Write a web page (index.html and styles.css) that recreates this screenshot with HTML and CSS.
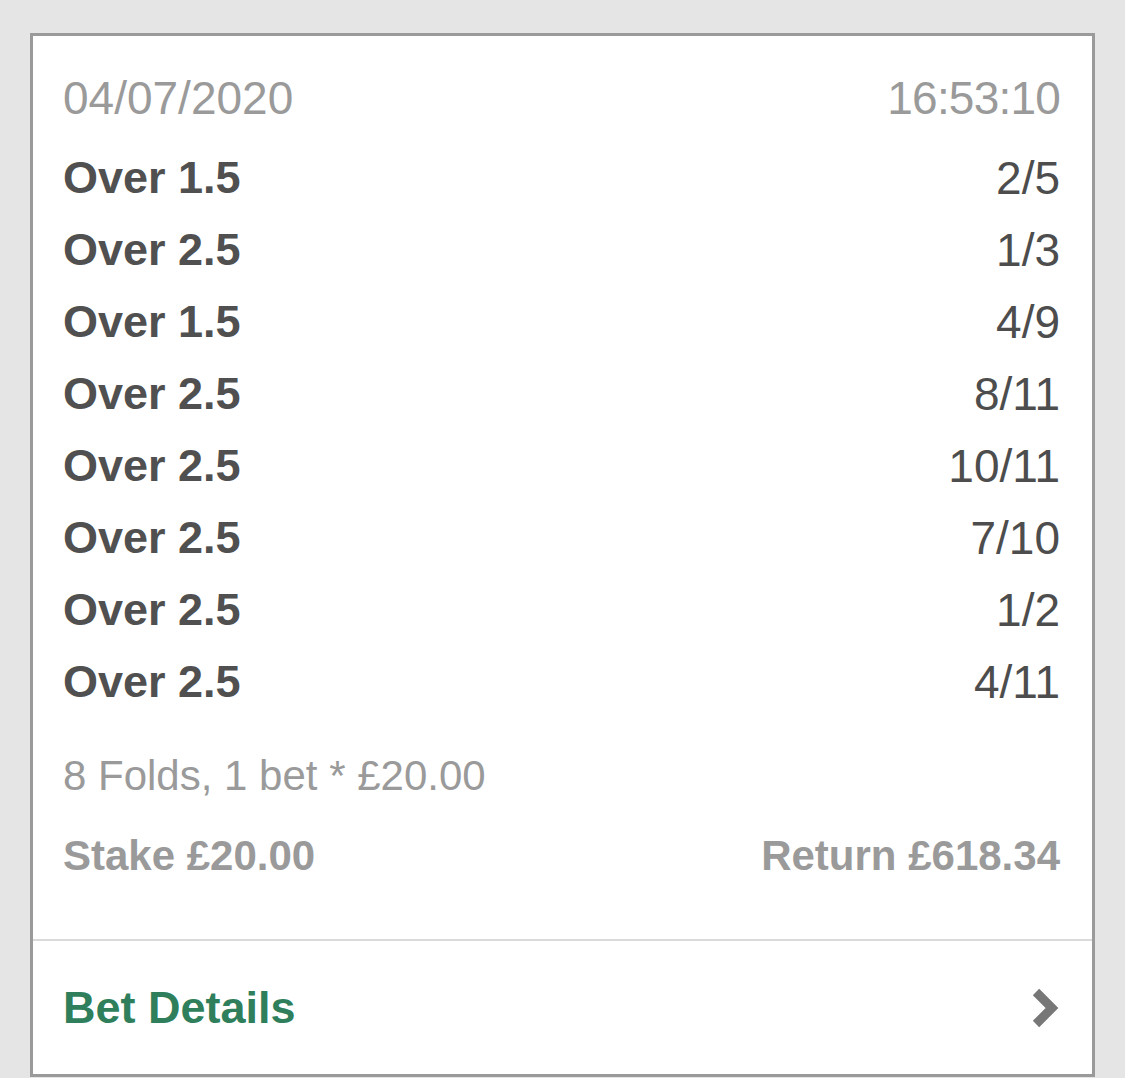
FILE: index.html
```html
<!DOCTYPE html>
<html lang="en">
<head>
    <meta charset="UTF-8">
    <meta name="viewport" content="width=device-width, initial-scale=1.0">
    <title>Bet History</title>
    <link rel="stylesheet" href="styles.css">
</head>
<body>
    <div class="bet-card">
        <div class="bet-body">
            <div class="row meta">
                <span>04/07/2020</span>
                <span class="time">16:53:10</span>
            </div>

            <!-- selecoes -->
            <div class="legs">
                <div class="row leg"><span class="market">Over 1.5</span><span class="odds">2/5</span></div>
                <div class="row leg"><span class="market">Over 2.5</span><span class="odds">1/3</span></div>
                <div class="row leg"><span class="market">Over 1.5</span><span class="odds">4/9</span></div>
                <div class="row leg"><span class="market">Over 2.5</span><span class="odds">8/11</span></div>
                <div class="row leg"><span class="market">Over 2.5</span><span class="odds">10/11</span></div>
                <div class="row leg"><span class="market">Over 2.5</span><span class="odds">7/10</span></div>
                <div class="row leg"><span class="market">Over 2.5</span><span class="odds">1/2</span></div>
                <div class="row leg"><span class="market">Over 2.5</span><span class="odds">4/11</span></div>
            </div>

            <div class="row summary">
                <span>8 Folds, 1 bet * £20.00</span>
            </div>
            <div class="row totals">
                <span>Stake £20.00</span>
                <span>Return £618.34</span>
            </div>
        </div>

        <div class="bet-footer">
            <span class="details-link">Bet Details</span>
            <svg class="chevron" width="30" height="44" viewBox="0 0 30 44">
                <polyline points="6,6 22,22 6,38" fill="none" stroke="#777" stroke-width="9" stroke-linejoin="miter"/>
            </svg>
        </div>
    </div>
</body>
</html>
```

FILE: styles.css
```css
body {
    margin: 0;
    padding: 33px 30px 0;
    background-color: #e5e5e5;
    font-family: "Liberation Sans", Arial, sans-serif;
}

.bet-card {
    background-color: #fff;
    border: 3px solid #9a9a9a;
}

.bet-body {
    padding: 26px 32px 47px 30px;
}

.row {
    display: flex;
    justify-content: space-between;
    align-items: center;
    font-size: 46px;
    line-height: 72px;
}

.meta {
    color: #9a9a9a;
}

.meta .time {
    letter-spacing: -0.8px;
}

.legs {
    margin-top: 8px;
}

.leg .market {
    font-size: 45px;
    font-weight: bold;
    color: #505050;
}

.leg .odds {
    color: #4d4d4d;
}

.summary {
    margin-top: 22px;
    font-size: 42px;
    color: #9a9a9a;
}

.totals {
    margin-top: 8px;
    font-size: 42px;
    font-weight: bold;
    color: #9a9a9a;
}

.bet-footer {
    border-top: 2px solid #dadada;
    height: 133px;
    padding: 0 32px 0 30px;
    display: flex;
    justify-content: space-between;
    align-items: center;
}

.details-link {
    font-size: 45px;
    font-weight: bold;
    color: #2f7f5c;
}

.chevron {
    display: block;
}
```
